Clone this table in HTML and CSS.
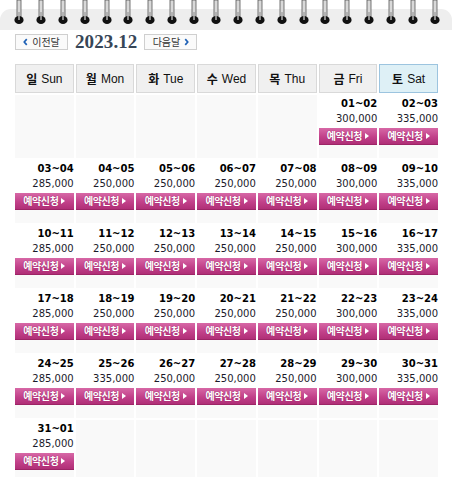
FILE: index.html
```html
<!DOCTYPE html>
<html lang="ko">
<head>
<meta charset="utf-8">
<title>2023.12 예약</title>
<link rel="stylesheet" href="styles.css">
</head>
<body>
<div class="spiral">
  <div class="bar"></div>
  <div class="rings">
    <svg class="ring" viewBox="0 0 10 26"><rect x="3" y="0" width="4" height="19" fill="#d9d9d9" stroke="#555" stroke-width="0.8"/><ellipse cx="5" cy="20" rx="4.6" ry="4" fill="#111"/><rect x="4.2" y="12" width="1.6" height="8" fill="#aaa"/></svg>
    <svg class="ring" viewBox="0 0 10 26"><rect x="3" y="0" width="4" height="19" fill="#d9d9d9" stroke="#555" stroke-width="0.8"/><ellipse cx="5" cy="20" rx="4.6" ry="4" fill="#111"/><rect x="4.2" y="12" width="1.6" height="8" fill="#aaa"/></svg>
    <svg class="ring" viewBox="0 0 10 26"><rect x="3" y="0" width="4" height="19" fill="#d9d9d9" stroke="#555" stroke-width="0.8"/><ellipse cx="5" cy="20" rx="4.6" ry="4" fill="#111"/><rect x="4.2" y="12" width="1.6" height="8" fill="#aaa"/></svg>
    <svg class="ring" viewBox="0 0 10 26"><rect x="3" y="0" width="4" height="19" fill="#d9d9d9" stroke="#555" stroke-width="0.8"/><ellipse cx="5" cy="20" rx="4.6" ry="4" fill="#111"/><rect x="4.2" y="12" width="1.6" height="8" fill="#aaa"/></svg>
    <svg class="ring" viewBox="0 0 10 26"><rect x="3" y="0" width="4" height="19" fill="#d9d9d9" stroke="#555" stroke-width="0.8"/><ellipse cx="5" cy="20" rx="4.6" ry="4" fill="#111"/><rect x="4.2" y="12" width="1.6" height="8" fill="#aaa"/></svg>
    <svg class="ring" viewBox="0 0 10 26"><rect x="3" y="0" width="4" height="19" fill="#d9d9d9" stroke="#555" stroke-width="0.8"/><ellipse cx="5" cy="20" rx="4.6" ry="4" fill="#111"/><rect x="4.2" y="12" width="1.6" height="8" fill="#aaa"/></svg>
    <svg class="ring" viewBox="0 0 10 26"><rect x="3" y="0" width="4" height="19" fill="#d9d9d9" stroke="#555" stroke-width="0.8"/><ellipse cx="5" cy="20" rx="4.6" ry="4" fill="#111"/><rect x="4.2" y="12" width="1.6" height="8" fill="#aaa"/></svg>
    <svg class="ring" viewBox="0 0 10 26"><rect x="3" y="0" width="4" height="19" fill="#d9d9d9" stroke="#555" stroke-width="0.8"/><ellipse cx="5" cy="20" rx="4.6" ry="4" fill="#111"/><rect x="4.2" y="12" width="1.6" height="8" fill="#aaa"/></svg>
    <svg class="ring" viewBox="0 0 10 26"><rect x="3" y="0" width="4" height="19" fill="#d9d9d9" stroke="#555" stroke-width="0.8"/><ellipse cx="5" cy="20" rx="4.6" ry="4" fill="#111"/><rect x="4.2" y="12" width="1.6" height="8" fill="#aaa"/></svg>
    <svg class="ring" viewBox="0 0 10 26"><rect x="3" y="0" width="4" height="19" fill="#d9d9d9" stroke="#555" stroke-width="0.8"/><ellipse cx="5" cy="20" rx="4.6" ry="4" fill="#111"/><rect x="4.2" y="12" width="1.6" height="8" fill="#aaa"/></svg>
    <svg class="ring" viewBox="0 0 10 26"><rect x="3" y="0" width="4" height="19" fill="#d9d9d9" stroke="#555" stroke-width="0.8"/><ellipse cx="5" cy="20" rx="4.6" ry="4" fill="#111"/><rect x="4.2" y="12" width="1.6" height="8" fill="#aaa"/></svg>
    <svg class="ring" viewBox="0 0 10 26"><rect x="3" y="0" width="4" height="19" fill="#d9d9d9" stroke="#555" stroke-width="0.8"/><ellipse cx="5" cy="20" rx="4.6" ry="4" fill="#111"/><rect x="4.2" y="12" width="1.6" height="8" fill="#aaa"/></svg>
    <svg class="ring" viewBox="0 0 10 26"><rect x="3" y="0" width="4" height="19" fill="#d9d9d9" stroke="#555" stroke-width="0.8"/><ellipse cx="5" cy="20" rx="4.6" ry="4" fill="#111"/><rect x="4.2" y="12" width="1.6" height="8" fill="#aaa"/></svg>
    <svg class="ring" viewBox="0 0 10 26"><rect x="3" y="0" width="4" height="19" fill="#d9d9d9" stroke="#555" stroke-width="0.8"/><ellipse cx="5" cy="20" rx="4.6" ry="4" fill="#111"/><rect x="4.2" y="12" width="1.6" height="8" fill="#aaa"/></svg>
    <svg class="ring" viewBox="0 0 10 26"><rect x="3" y="0" width="4" height="19" fill="#d9d9d9" stroke="#555" stroke-width="0.8"/><ellipse cx="5" cy="20" rx="4.6" ry="4" fill="#111"/><rect x="4.2" y="12" width="1.6" height="8" fill="#aaa"/></svg>
    <svg class="ring" viewBox="0 0 10 26"><rect x="3" y="0" width="4" height="19" fill="#d9d9d9" stroke="#555" stroke-width="0.8"/><ellipse cx="5" cy="20" rx="4.6" ry="4" fill="#111"/><rect x="4.2" y="12" width="1.6" height="8" fill="#aaa"/></svg>
    <svg class="ring" viewBox="0 0 10 26"><rect x="3" y="0" width="4" height="19" fill="#d9d9d9" stroke="#555" stroke-width="0.8"/><ellipse cx="5" cy="20" rx="4.6" ry="4" fill="#111"/><rect x="4.2" y="12" width="1.6" height="8" fill="#aaa"/></svg>
    <svg class="ring" viewBox="0 0 10 26"><rect x="3" y="0" width="4" height="19" fill="#d9d9d9" stroke="#555" stroke-width="0.8"/><ellipse cx="5" cy="20" rx="4.6" ry="4" fill="#111"/><rect x="4.2" y="12" width="1.6" height="8" fill="#aaa"/></svg>
    <svg class="ring" viewBox="0 0 10 26"><rect x="3" y="0" width="4" height="19" fill="#d9d9d9" stroke="#555" stroke-width="0.8"/><ellipse cx="5" cy="20" rx="4.6" ry="4" fill="#111"/><rect x="4.2" y="12" width="1.6" height="8" fill="#aaa"/></svg>
    <svg class="ring" viewBox="0 0 10 26"><rect x="3" y="0" width="4" height="19" fill="#d9d9d9" stroke="#555" stroke-width="0.8"/><ellipse cx="5" cy="20" rx="4.6" ry="4" fill="#111"/><rect x="4.2" y="12" width="1.6" height="8" fill="#aaa"/></svg>
  </div>
</div>

<div class="nav">
  <a class="navbtn"><svg class="chev" viewBox="0 0 6 9"><polyline points="4.5,1 1.5,4.5 4.5,8" fill="none" stroke="#1c5fb5" stroke-width="2"/></svg>이전달</a>
  <span class="month">2023.12</span>
  <a class="navbtn">다음달<svg class="chev" viewBox="0 0 6 9"><polyline points="1.5,1 4.5,4.5 1.5,8" fill="none" stroke="#1c5fb5" stroke-width="2"/></svg></a>
</div>

<div class="cal">
  <div class="wk"><b>일</b>Sun</div>
  <div class="wk"><b>월</b>Mon</div>
  <div class="wk"><b>화</b>Tue</div>
  <div class="wk"><b>수</b>Wed</div>
  <div class="wk"><b>목</b>Thu</div>
  <div class="wk"><b>금</b>Fri</div>
  <div class="wk sat"><b>토</b>Sat</div>

  <div class="day"></div>
  <div class="day"></div>
  <div class="day"></div>
  <div class="day"></div>
  <div class="day"></div>
  <div class="day"><div class="info"><div class="d">01~02</div><div class="p">300,000</div><a class="btn">예약신청<i></i></a></div></div>
  <div class="day"><div class="info"><div class="d">02~03</div><div class="p">335,000</div><a class="btn">예약신청<i></i></a></div></div>

  <div class="day"><div class="info"><div class="d">03~04</div><div class="p">285,000</div><a class="btn">예약신청<i></i></a></div></div>
  <div class="day"><div class="info"><div class="d">04~05</div><div class="p">250,000</div><a class="btn">예약신청<i></i></a></div></div>
  <div class="day"><div class="info"><div class="d">05~06</div><div class="p">250,000</div><a class="btn">예약신청<i></i></a></div></div>
  <div class="day"><div class="info"><div class="d">06~07</div><div class="p">250,000</div><a class="btn">예약신청<i></i></a></div></div>
  <div class="day"><div class="info"><div class="d">07~08</div><div class="p">250,000</div><a class="btn">예약신청<i></i></a></div></div>
  <div class="day"><div class="info"><div class="d">08~09</div><div class="p">300,000</div><a class="btn">예약신청<i></i></a></div></div>
  <div class="day"><div class="info"><div class="d">09~10</div><div class="p">335,000</div><a class="btn">예약신청<i></i></a></div></div>

  <div class="day"><div class="info"><div class="d">10~11</div><div class="p">285,000</div><a class="btn">예약신청<i></i></a></div></div>
  <div class="day"><div class="info"><div class="d">11~12</div><div class="p">250,000</div><a class="btn">예약신청<i></i></a></div></div>
  <div class="day"><div class="info"><div class="d">12~13</div><div class="p">250,000</div><a class="btn">예약신청<i></i></a></div></div>
  <div class="day"><div class="info"><div class="d">13~14</div><div class="p">250,000</div><a class="btn">예약신청<i></i></a></div></div>
  <div class="day"><div class="info"><div class="d">14~15</div><div class="p">250,000</div><a class="btn">예약신청<i></i></a></div></div>
  <div class="day"><div class="info"><div class="d">15~16</div><div class="p">300,000</div><a class="btn">예약신청<i></i></a></div></div>
  <div class="day"><div class="info"><div class="d">16~17</div><div class="p">335,000</div><a class="btn">예약신청<i></i></a></div></div>

  <div class="day"><div class="info"><div class="d">17~18</div><div class="p">285,000</div><a class="btn">예약신청<i></i></a></div></div>
  <div class="day"><div class="info"><div class="d">18~19</div><div class="p">250,000</div><a class="btn">예약신청<i></i></a></div></div>
  <div class="day"><div class="info"><div class="d">19~20</div><div class="p">250,000</div><a class="btn">예약신청<i></i></a></div></div>
  <div class="day"><div class="info"><div class="d">20~21</div><div class="p">250,000</div><a class="btn">예약신청<i></i></a></div></div>
  <div class="day"><div class="info"><div class="d">21~22</div><div class="p">250,000</div><a class="btn">예약신청<i></i></a></div></div>
  <div class="day"><div class="info"><div class="d">22~23</div><div class="p">300,000</div><a class="btn">예약신청<i></i></a></div></div>
  <div class="day"><div class="info"><div class="d">23~24</div><div class="p">335,000</div><a class="btn">예약신청<i></i></a></div></div>

  <div class="day"><div class="info"><div class="d">24~25</div><div class="p">285,000</div><a class="btn">예약신청<i></i></a></div></div>
  <div class="day"><div class="info"><div class="d">25~26</div><div class="p">335,000</div><a class="btn">예약신청<i></i></a></div></div>
  <div class="day"><div class="info"><div class="d">26~27</div><div class="p">250,000</div><a class="btn">예약신청<i></i></a></div></div>
  <div class="day"><div class="info"><div class="d">27~28</div><div class="p">250,000</div><a class="btn">예약신청<i></i></a></div></div>
  <div class="day"><div class="info"><div class="d">28~29</div><div class="p">250,000</div><a class="btn">예약신청<i></i></a></div></div>
  <div class="day"><div class="info"><div class="d">29~30</div><div class="p">300,000</div><a class="btn">예약신청<i></i></a></div></div>
  <div class="day"><div class="info"><div class="d">30~31</div><div class="p">335,000</div><a class="btn">예약신청<i></i></a></div></div>

  <div class="day"><div class="info"><div class="d">31~01</div><div class="p">285,000</div><a class="btn">예약신청<i></i></a></div></div>
  <div class="day"></div>
  <div class="day"></div>
  <div class="day"></div>
  <div class="day"></div>
  <div class="day"></div>
  <div class="day"></div>
</div>
</body>
</html>
```

FILE: styles.css
```css
html, body {
  margin: 0;
  padding: 0;
  background: #fff;
}
body {
  font-family: "DejaVu Sans", Verdana, "Noto Sans CJK KR", sans-serif;
  overflow: hidden;
}

.spiral {
  position: relative;
  height: 30px;
  padding-top: 9px;
  box-sizing: border-box;
}
.bar {
  height: 21px;
  margin-right: 2px;
  background: #eeeeee;
  border-radius: 11px 11px 0 0;
}
.rings {
  position: absolute;
  top: 0;
  left: 0;
  right: 0;
  display: flex;
  gap: 11.9px;
  padding-left: 14px;
}
.ring {
  width: 10px;
  height: 26px;
  flex: none;
  display: block;
}

.nav {
  display: flex;
  align-items: center;
  gap: 7px;
  margin: 4px 0 0 15px;
  height: 16px;
}
.navbtn {
  display: flex;
  align-items: center;
  justify-content: center;
  gap: 4px;
  width: 51px;
  height: 14px;
  border: 1px solid #cfcfcf;
  background: #fafafa;
  font-family: "Noto Sans CJK KR", sans-serif;
  font-size: 10px;
  color: #333;
  line-height: 14px;
}
.chev {
  width: 5px;
  height: 8px;
  display: block;
}
.month {
  font-family: "Liberation Serif", "Times New Roman", serif;
  font-weight: bold;
  font-size: 19px;
  line-height: 16px;
  color: #374657;
  letter-spacing: 0.1px;
}

.cal {
  display: grid;
  grid-template-columns: repeat(7, 1fr);
  grid-auto-rows: 63px;
  grid-template-rows: 29px;
  gap: 2px;
  width: 423px;
  margin: 14px 0 0 15px;
}
.wk {
  box-sizing: border-box;
  border: 1px solid #d9d9d9;
  background: #f0f0f0;
  display: flex;
  align-items: center;
  justify-content: center;
  gap: 4px;
  font-family: "Liberation Sans", Arial, "Noto Sans CJK KR", sans-serif;
  font-size: 12px;
  color: #111;
}
.wk b {
  font-family: "Noto Sans CJK KR", sans-serif;
  font-weight: bold;
  font-size: 12px;
}
.wk.sat {
  background: #def0f6;
  border-color: #9cc4df;
}

.day {
  background: #f9f9f9;
}
.info {
  background: #fff;
  padding-top: 2px;
  text-align: right;
}
.d {
  font-size: 10px;
  font-weight: bold;
  line-height: 14px;
  color: #000;
}
.p {
  font-size: 10px;
  line-height: 16px;
  color: #1a1a2a;
}
.btn {
  display: flex;
  align-items: center;
  justify-content: center;
  gap: 3px;
  height: 17px;
  margin-top: 1px;
  box-sizing: border-box;
  background: linear-gradient(#d768a6, #c2418a 55%, #b02f77);
  border-bottom: 1px solid #9c2466;
  font-family: "Noto Sans CJK KR", sans-serif;
  font-size: 10px;
  font-weight: bold;
  letter-spacing: -0.4px;
  color: #fff;
  line-height: 16px;
  text-shadow: 0 0 1px #8a1d58;
}
.btn i {
  display: block;
  width: 0;
  height: 0;
  border-top: 3.5px solid transparent;
  border-bottom: 3.5px solid transparent;
  border-left: 4px solid #fff;
}
```
